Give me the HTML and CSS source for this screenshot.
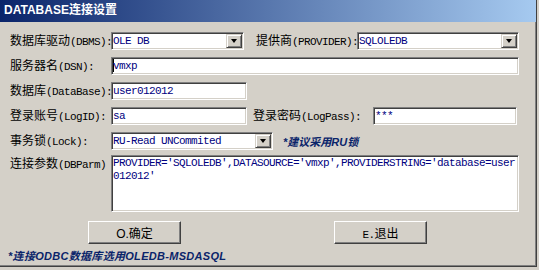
FILE: index.html
```html
<!DOCTYPE html>
<html lang="zh-CN">
<head>
  <meta charset="UTF-8" />
  <title>DATABASE连接设置</title>
  <link rel="stylesheet" href="styles.css">
</head>
<body>

  <div class="window">
    <div class="titlebar">DATABASE连接设置</div>

    <div class="form">
      <div class="row">
        <span class="label">数据库驱动<span class="en">(DBMS):</span></span>
        <div class="field combo dbms"><span>OLE DB</span><span class="drop"></span></div>
        <span class="label second">提供商<span class="en">(PROVIDER):</span></span>
        <div class="field combo provider"><span>SQLOLEDB</span><span class="drop"></span></div>
      </div>

      <div class="row">
        <span class="label">服务器名<span class="en">(DSN):</span></span>
        <div class="field wide"><span class="caret"></span>vmxp</div>
      </div>

      <div class="row">
        <span class="label">数据库<span class="en">(DataBase):</span></span>
        <div class="field short">user012012</div>
      </div>

      <div class="row">
        <span class="label">登录账号<span class="en">(LogID):</span></span>
        <div class="field short">sa</div>
        <span class="label pass-label">登录密码<span class="en">(LogPass):</span></span>
        <div class="field pass">***</div>
      </div>

      <div class="row">
        <span class="label">事务锁<span class="en">(Lock):</span></span>
        <div class="field combo lock"><span>RU-Read UNCommited</span><span class="drop"></span></div>
        <span class="hint lock-hint">*建议采用RU锁</span>
      </div>

      <div class="row parm-row">
        <span class="label">连接参数<span class="en">(DBParm)</span></span>
        <div class="field wide parm">PROVIDER='SQLOLEDB',DATASOURCE='vmxp',PROVIDERSTRING='database=user<br>012012'</div>
      </div>
    </div>

    <div class="actions">
      <button class="btn">O.确定</button>
      <button class="btn"><span class="en">E.</span>退出</button>
    </div>

    <div class="hint footnote">*连接ODBC数据库选用OLEDB-MSDASQL</div>
  </div>

</body>
</html>
```

FILE: styles.css
```css
body {
  margin: 0;
  background: #d4d0c8;
  font-family: "Noto Sans CJK SC", sans-serif;
  font-size: 12px;
  color: #000;
}

.window {
  width: 537px;
  height: 267px;
  box-sizing: border-box;
  background: #d4d0c8;
  border-right: 1px solid #404040;
  border-bottom: 1px solid #404040;
  box-shadow: inset -1px -1px #808080;
}

.titlebar {
  height: 22px;
  line-height: 22px;
  padding-left: 4px;
  background: linear-gradient(to right, #0a246a, #a6caf0);
  color: #fff;
  font: bold 12px "Liberation Sans", "Noto Sans CJK SC", sans-serif;
  white-space: nowrap;
}

.form {
  display: flex;
  flex-direction: column;
  gap: 7px;
  padding: 10px 0 0 10px;
}

.row {
  display: flex;
  align-items: center;
  height: 18px;
}

.label {
  flex: none;
  width: 101px;
  white-space: nowrap;
  line-height: 18px;
}

.label.second { margin-left: 12px; }
.label.pass-label { margin-left: 6px; width: 120px; }

.en {
  font-family: "Liberation Mono", monospace;
  font-size: 11px;
  letter-spacing: -0.6px;
}

/* sunken win2k edit box */
.field {
  flex: none;
  box-sizing: border-box;
  height: 18px;
  padding: 0 1px;
  background: #fff;
  border: 1px solid;
  border-color: #808080 #fff #fff #808080;
  box-shadow: inset 1px 1px #404040, inset -1px -1px #d4d0c8;
  color: #000080;
  font: 11px "Liberation Mono", monospace;
  letter-spacing: -0.6px;
  line-height: 16px;
  white-space: nowrap;
  overflow: hidden;
}

.combo {
  display: flex;
  align-items: center;
  justify-content: space-between;
}

.drop {
  flex: none;
  box-sizing: border-box;
  width: 16px;
  height: 14px;
  background: #d4d0c8;
  border: 1px solid;
  border-color: #d4d0c8 #404040 #404040 #d4d0c8;
  box-shadow: inset 1px 1px #fff, inset -1px -1px #808080;
  display: flex;
  align-items: center;
  justify-content: center;
}

.drop::after {
  content: "";
  border-style: solid;
  border-width: 4px 3.5px 0;
  border-color: #000 transparent transparent;
}

.caret {
  display: inline-block;
  width: 1px;
  height: 13px;
  margin-right: -1px;
  background: #000;
  vertical-align: -3px;
}

.dbms { width: 133px; }
.provider { width: 162px; }
.wide { width: 408px; }
.short { width: 136px; }
.pass { width: 144px; }
.lock { width: 162px; }

.parm-row {
  height: 57px;
  align-items: flex-start;
  margin-top: -2px;
}

.parm-row .label { line-height: 16px; }

.parm {
  height: 57px;
  padding-top: 1px;
  line-height: 13px;
}

.hint {
  font: italic bold 11px "Liberation Sans", "Noto Sans CJK SC", sans-serif;
  color: #0a246a;
  white-space: nowrap;
}

.lock-hint { margin-left: 10px; }

.actions {
  display: flex;
  gap: 153px;
  padding: 9px 0 0 88px;
}

.btn {
  box-sizing: border-box;
  width: 93px;
  height: 23px;
  padding: 0;
  background: #d4d0c8;
  border: 1px solid;
  border-color: #fff #404040 #404040 #fff;
  box-shadow: inset -1px -1px #808080;
  font: 12px "Liberation Sans", "Noto Sans CJK SC", sans-serif;
  color: #000;
}

.footnote {
  padding: 3px 0 0 8px;
  letter-spacing: 0.3px;
}
```
